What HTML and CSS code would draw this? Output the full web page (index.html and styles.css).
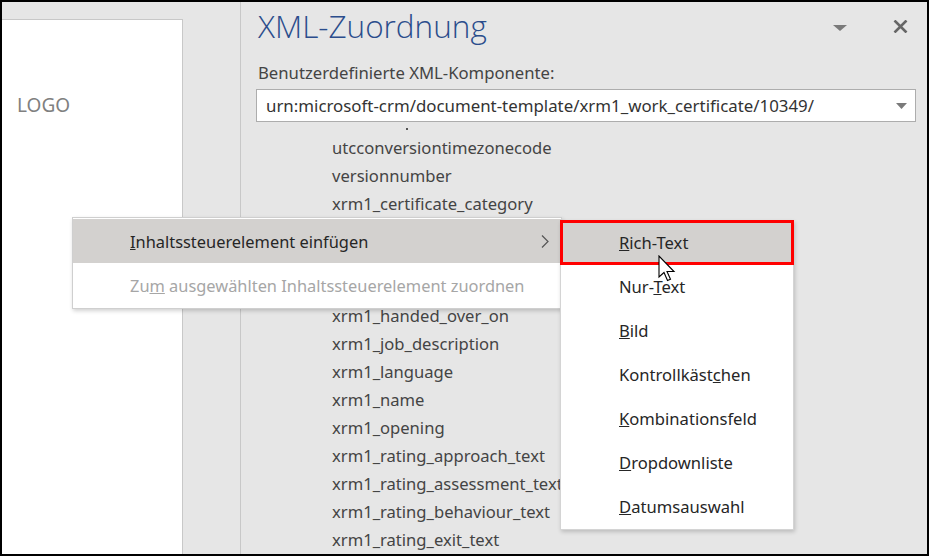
FILE: index.html
```html
<!DOCTYPE html>
<html lang="de">
  <head>
    <meta charset="UTF-8" />
    <title>XML-Zuordnung</title>
    <link rel="stylesheet" href="styles.css">
  </head>
  <body>
    <div class="screen">
      <!-- Document page on the left -->
      <div class="doc-area">
        <div class="page">
          <p class="logo">LOGO</p>
        </div>
      </div>

      <!-- XML mapping pane -->
      <div class="pane">
        <div class="pane-header">
          <h1 class="pane-title">XML-Zuordnung</h1>
          <div class="pane-tools">
            <svg class="tool-arrow" width="14" height="6" viewBox="0 0 14 6">
              <path d="M0 0 L14 0 L7 6 Z" fill="#7a7a7a" />
            </svg>
            <svg class="tool-close" width="15" height="13" viewBox="0 0 15 13">
              <path d="M1.5 0.5 L13.5 12.5 M13.5 0.5 L1.5 12.5" stroke="#666" stroke-width="2.6" />
            </svg>
          </div>
        </div>

        <p class="field-label">Benutzerdefinierte XML-Komponente:</p>
        <div class="combo">
          <span class="combo-text">urn:microsoft-crm/document-template/xrm1_work_certificate/10349/</span>
          <svg width="11" height="6" viewBox="0 0 11 6">
            <path d="M0 0 L11 0 L5.5 6 Z" fill="#7a7a7a" />
          </svg>
        </div>

        <!-- rows 4-6 sit under the context menu -->
        <ul class="tree">
          <li>utcconversiontimezonecode</li>
          <li>versionnumber</li>
          <li>xrm1_certificate_category</li>
          <li></li>
          <li></li>
          <li></li>
          <li>xrm1_handed_over_on</li>
          <li>xrm1_job_description</li>
          <li>xrm1_language</li>
          <li>xrm1_name</li>
          <li>xrm1_opening</li>
          <li>xrm1_rating_approach_text</li>
          <li>xrm1_rating_assessment_text</li>
          <li>xrm1_rating_behaviour_text</li>
          <li>xrm1_rating_exit_text</li>
        </ul>
      </div>

      <!-- Context menu -->
      <div class="menu">
        <div class="menu-item active">
          <span><u>I</u>nhaltssteuerelement einfügen</span>
          <svg width="8" height="13" viewBox="0 0 8 13">
            <path d="M1 0.5 L7 6.5 L1 12.5" fill="none" stroke="#555" stroke-width="1.2" />
          </svg>
        </div>
        <div class="menu-item disabled">
          <span>Zu<u>m</u> ausgewählten Inhaltssteuerelement zuordnen</span>
        </div>
      </div>

      <!-- Submenu -->
      <div class="submenu">
        <div class="sub-item selected"><u>R</u>ich-Text</div>
        <div class="sub-item">Nur-<u>T</u>ext</div>
        <div class="sub-item"><u>B</u>ild</div>
        <div class="sub-item">Kontrollkäst<u>c</u>hen</div>
        <div class="sub-item"><u>K</u>ombinationsfeld</div>
        <div class="sub-item"><u>D</u>ropdownliste</div>
        <div class="sub-item"><u>D</u>atumsauswahl</div>
      </div>

      <!-- Mouse pointer -->
      <svg class="pointer" width="18" height="27" viewBox="0 0 18 27">
        <path d="M1 1 L1 22 L6 17.5 L9.5 25.5 L12.5 24.2 L9 16.5 L16 16.5 Z" fill="#fff" stroke="#000" stroke-width="1.1" stroke-linejoin="miter" />
      </svg>
    </div>
  </body>
</html>
```

FILE: styles.css
```css
* {
  box-sizing: border-box;
}

body {
  margin: 0;
  font-family: "Segoe UI", "Noto Sans", "Open Sans", sans-serif;
}

.screen {
  position: relative;
  width: 929px;
  height: 556px;
  border: 2px solid #000;
  background-color: #e6e6e6;
  display: flex;
  overflow: hidden;
}

/* Document page */
.doc-area {
  width: 239px;
  border-right: 1px solid #c8c8c8;
  padding-top: 17px;
}

.page {
  width: 181px;
  height: 100%;
  background-color: #fff;
  border-top: 1px solid #c8c8c8;
  border-right: 1px solid #c8c8c8;
  padding: 72px 0 0 15px;
}

.logo {
  margin: 0;
  font-size: 19px;
  color: #808080;
}

/* XML pane */
.pane {
  flex: 1;
  padding: 4px 11px 0 17px;
}

.pane-header {
  display: flex;
  justify-content: space-between;
  align-items: flex-start;
  height: 56px;
}

.pane-title {
  margin: 0;
  font-family: "Segoe UI Light", "Open Sans", sans-serif;
  font-weight: 300;
  font-size: 31.5px;
  color: #2b4d8c;
  line-height: 40px;
}

.pane-tools {
  display: flex;
  align-items: center;
  gap: 46px;
  padding: 14px 8px 0 0;
}

.tool-arrow {
  margin-top: 2px;
}

.field-label {
  margin: 0 0 5px;
  font-size: 16.7px;
  color: #444;
  line-height: 22px;
}

.combo {
  display: flex;
  align-items: center;
  justify-content: space-between;
  height: 33px;
  margin-left: -2px;
  padding: 0 8px 0 9px;
  background-color: #fff;
  border: 1px solid #adadad;
}

.combo-text {
  font-size: 16.85px;
  color: #333;
}

.tree {
  position: relative;
  list-style: none;
  margin: 12px 0 0;
  padding: 0 0 0 74px;
}

.tree::before {
  content: "";
  position: absolute;
  left: 148px;
  top: -6px;
  width: 2px;
  height: 2px;
  background-color: #555;
}

.tree li {
  height: 28px;
  line-height: 28px;
  font-size: 16.6px;
  color: #444;
  white-space: nowrap;
}

/* Context menu (offsets are inside the 2px frame) */
.menu {
  position: absolute;
  left: 70px;
  top: 215px;
  width: 490px;
  background-color: #fff;
  border: 1px solid #cfcfcf;
  box-shadow: 1px 2px 4px rgba(0, 0, 0, 0.18);
  padding-top: 1px;
}

.menu-item {
  display: flex;
  align-items: center;
  justify-content: space-between;
  height: 44px;
  padding: 0 12px 0 57px;
  font-size: 16.4px;
  color: #262626;
}

.menu-item.active {
  background-color: #d3d1cf;
}

.menu-item.disabled {
  height: 45px;
  color: #a6a6a6;
}

/* Submenu */
.submenu {
  position: absolute;
  left: 558px;
  top: 218px;
  width: 234px;
  height: 310px;
  background-color: #fff;
  border: 1px solid #d4d4d4;
  box-shadow: 1px 2px 4px rgba(0, 0, 0, 0.18);
}

.sub-item {
  height: 44px;
  line-height: 44px;
  padding-left: 58px;
  font-size: 16.6px;
  color: #262626;
}

.sub-item.selected {
  margin: -1px -1px 0;
  height: 45px;
  border: 3px solid #ff0000;
  background-color: #d3d1cf;
  line-height: 39px;
  padding-left: 56px;
}

.pointer {
  position: absolute;
  left: 656px;
  top: 253px;
}
```
